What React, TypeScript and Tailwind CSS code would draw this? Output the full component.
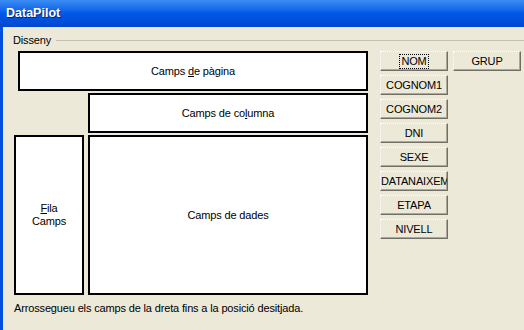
const fields = ["NOM", "COGNOM1", "COGNOM2", "DNI", "SEXE", "DATANAIXEMENT", "ETAPA", "NIVELL"];

function FieldButton({ label, focused }: { label: string; focused?: boolean }) {
  return (
    <div className="h-[20px] w-[68px] flex items-center [justify-content:safe_center] overflow-hidden whitespace-nowrap bg-[#ECE9D8] border border-t-white border-l-white border-b-[#716F64] border-r-[#716F64] [border-top-style:dotted] [border-left-style:dotted] shadow-[inset_-1px_-1px_0_#ACA899] text-[11px] leading-[13px] text-black">
      {focused ? <span className="outline outline-1 outline-dotted outline-black px-[1px]">{label}</span> : label}
    </div>
  );
}

export default function App() {
  return (
    <div className="w-[524px] h-[330px] overflow-hidden flex flex-col bg-[#ECE9D8] font-['Liberation_Sans',Arial,sans-serif]">
      <div className="h-[27px] shrink-0 flex items-center pl-[6px] bg-gradient-to-b from-[#3C8CF5] via-[#0058E6] to-[#0047D0]">
        <span className="text-white font-bold text-[12.5px] [text-shadow:1px_1px_0_#0A246A]">
          DataPilot
        </span>
      </div>
      <div className="flex flex-1">
        <div className="w-[3px] bg-[#0050E0]" />
        <div className="flex-1 flex flex-col pl-[10px] pt-[7px] text-[11px] leading-[13px] tracking-[-0.15px] text-black">
          <div className="flex items-center gap-[5px] h-[13px]">
            <span>Disseny</span>
            <div className="flex-1 border-t border-[#C5C2B2]" />
          </div>
          <div className="flex items-start mt-[4px]">
            <div className="ml-[1px] w-[354px] flex flex-col gap-[2px]">
              <div className="ml-[4px] w-[350px] h-[40px] bg-white border-2 border-black flex items-center justify-center">
                <span>Camps <u>d</u>e pàgina</span>
              </div>
              <div className="ml-[74px] w-[280px] h-[40px] bg-white border-2 border-black flex items-center justify-center">
                <span>Camps de co<u>l</u>umna</span>
              </div>
              <div className="flex gap-[4px] h-[160px]">
                <div className="w-[70px] bg-white border-2 border-black flex flex-col items-center justify-center text-center">
                  <span><u>F</u>ila</span>
                  <span>Camps</span>
                </div>
                <div className="w-[280px] bg-white border-2 border-black flex items-center justify-center">
                  Camps de dades
                </div>
              </div>
            </div>
            <div className="ml-[12px] flex gap-[5px]">
              <div className="flex flex-col gap-[4px]">
                {fields.map((f, i) => (
                  <FieldButton key={f} label={f} focused={i === 0} />
                ))}
              </div>
              <div className="flex flex-col">
                <FieldButton label="GRUP" />
              </div>
            </div>
          </div>
          <div className="ml-[1px] mt-[7px]">Arrossegueu els camps de la dreta fins a la posició desitjada.</div>
        </div>
      </div>
    </div>
  );
}
